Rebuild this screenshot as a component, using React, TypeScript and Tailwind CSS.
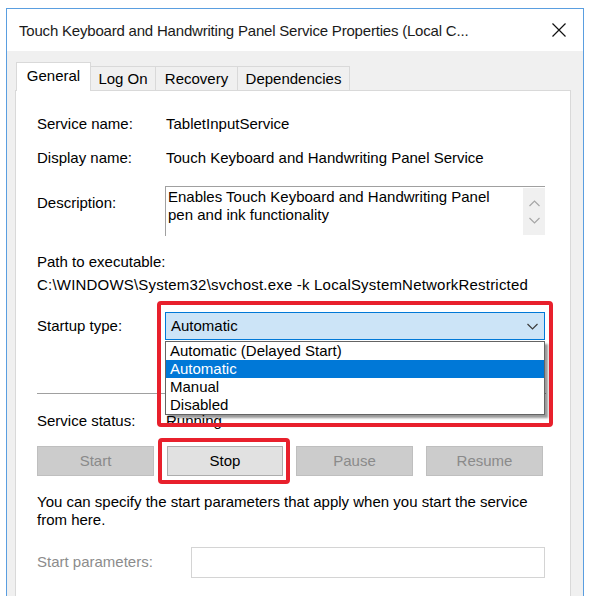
import React from "react";

const font = { fontFamily: '"Liberation Sans", Arial, sans-serif' };

function Chevron({ up = false, color = "#3c3c3c" }: { up?: boolean; color?: string }) {
  return (
    <svg width="11" height="7" viewBox="0 0 11 7">
      <path
        d={up ? "M0.5 6 L5.5 1 L10.5 6" : "M0.5 1 L5.5 6 L10.5 1"}
        fill="none"
        stroke={color}
        strokeWidth="1.2"
      />
    </svg>
  );
}

export default function App() {
  return (
    <div className="w-[595px] h-[596px] bg-white overflow-hidden text-[15px] text-black" style={font}>
      <div className="ml-[6px] mt-[8px] w-[578px] h-[588px] border-l border-t border-r border-[#5a9ee0] flex flex-col">
        {/* Title bar */}
        <div className="h-[42px] shrink-0 bg-white flex items-center pl-[12px] pr-[17px]">
          <div className="flex-1 text-[15px] tracking-[-0.2px] leading-none text-[#1a1a1a] whitespace-nowrap">
            Touch Keyboard and Handwriting Panel Service Properties (Local C...
          </div>
          <svg width="14" height="14" viewBox="0 0 14 14">
            <path d="M0.5 0.5 L13.5 13.5 M13.5 0.5 L0.5 13.5" stroke="#111" strokeWidth="1.2" />
          </svg>
        </div>
        {/* Body */}
        <div className="flex-1 bg-[#f0f0f0] pl-[8px] pt-[11px]">
          {/* Tabs */}
          <div className="flex items-end h-[29px]">
            <div className="relative z-10 ml-[1px] w-[75px] h-[29px] bg-white border-l border-t border-r border-[#d9d9d9] flex items-center justify-center pb-[2px]">
              General
            </div>
            <div className="w-[65px] h-[25px] border-t border-r border-[#d9d9d9] flex items-center justify-center">
              Log On
            </div>
            <div className="w-[82px] h-[25px] border-t border-r border-[#d9d9d9] flex items-center justify-center">
              Recovery
            </div>
            <div className="w-[112px] h-[25px] border-t border-r border-[#d9d9d9] flex items-center justify-center">
              Dependencies
            </div>
          </div>
          {/* Panel */}
          <div className="relative -mt-px w-[556px] h-[520px] bg-white border border-[#d9d9d9] pl-[21px] pr-[24px]">
            <div className="flex items-center h-[18px] mt-[24px]">
              <div className="w-[129px]">Service name:</div>
              <div>TabletInputService</div>
            </div>
            <div className="flex items-center h-[18px] mt-[16px]">
              <div className="w-[129px]">Display name:</div>
              <div>Touch Keyboard and Handwriting Panel Service</div>
            </div>
            <div className="flex items-start mt-[19px]">
              <div className="w-[128px] pt-[8px] leading-[18px]">Description:</div>
              <div className="w-[380px] h-[50px] border-l border-t border-[#a0a0a0] flex">
                <div className="flex-1 pl-[2px] pt-[1px] leading-[18px]">
                  Enables Touch Keyboard and Handwriting Panel
                  <br />
                  pen and ink functionality
                </div>
                <div className="w-[22px] h-[47px] mt-[1px] bg-[#f0f0f0] flex flex-col items-center justify-center gap-[10px]">
                  <Chevron up color="#a6a6a6" />
                  <Chevron color="#a6a6a6" />
                </div>
              </div>
            </div>
            <div className="h-[18px] leading-[18px] mt-[17px]">Path to executable:</div>
            <div className="h-[18px] leading-[18px] mt-[5px] whitespace-nowrap tracking-[0.2px]">
              C:\WINDOWS\System32\svchost.exe -k LocalSystemNetworkRestricted
            </div>
            <div className="flex items-center mt-[18px]">
              <div className="w-[128px]">Startup type:</div>
              <div className="relative w-[380px] h-[28px] bg-[#cce4f7] border border-[#0078d7] flex items-center pl-[5px] pr-[6px]">
                <div className="flex-1">Automatic</div>
                <Chevron />
                {/* Dropdown list */}
                <div className="absolute left-[-1px] top-[28px] w-[380px] bg-white border border-[#646464] shadow-[3px_3px_2px_rgba(0,0,0,0.4)] z-10">
                  <div className="h-[18px] leading-[18px] pl-[4px]">Automatic (Delayed Start)</div>
                  <div className="h-[18px] leading-[18px] pl-[4px] bg-[#0078d7] text-white">Automatic</div>
                  <div className="h-[18px] leading-[18px] pl-[4px]">Manual</div>
                  <div className="h-[18px] leading-[18px] pl-[4px]">Disabled</div>
                </div>
              </div>
            </div>
            <div className="h-px bg-[#a0a0a0] mt-[53px]" />
            <div className="flex items-center h-[18px] mt-[18px]">
              <div className="w-[129px]">Service status:</div>
              <div>Running</div>
            </div>
            <div className="flex gap-[13px] mt-[16px]">
              <div className="w-[117px] h-[30px] bg-[#cccccc] border border-[#bfbfbf] text-[#8a8a8a] flex items-center justify-center">
                Start
              </div>
              <div className="w-[116px] h-[30px] bg-[#e1e1e1] border border-[#adadad] flex items-center justify-center">
                Stop
              </div>
              <div className="w-[117px] h-[30px] bg-[#cccccc] border border-[#bfbfbf] text-[#8a8a8a] flex items-center justify-center">
                Pause
              </div>
              <div className="w-[117px] h-[30px] bg-[#cccccc] border border-[#bfbfbf] text-[#8a8a8a] flex items-center justify-center">
                Resume
              </div>
            </div>
            <div className="mt-[17px] leading-[18px]">
              You can specify the start parameters that apply when you start the service
              <br />
              from here.
            </div>
            <div className="flex items-center mt-[18px]">
              <div className="w-[154px] text-[#8c8c8c]">Start parameters:</div>
              <div className="w-[354px] h-[31px] bg-white border border-[#d4d4d4]" />
            </div>

            {/* Red highlight boxes */}
            <div className="absolute left-[141px] top-[210px] w-[396px] h-[126px] border-[4px] border-[#e8202c] rounded-[4px] z-20 pointer-events-none" />
            <div className="absolute left-[142px] top-[347px] w-[132px] h-[46px] border-[4px] border-[#e8202c] rounded-[4px] z-20 pointer-events-none" />
          </div>
        </div>
      </div>
    </div>
  );
}
